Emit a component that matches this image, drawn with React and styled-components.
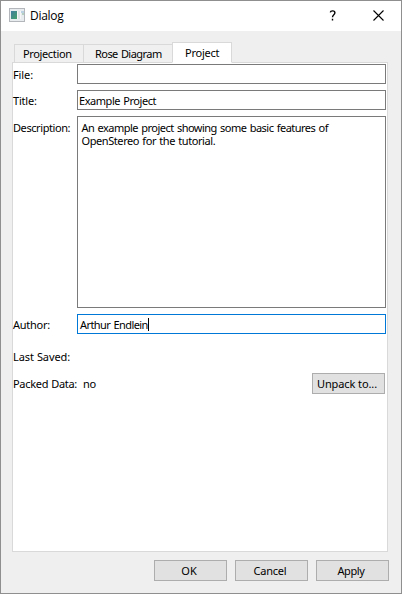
import React from "react";
import styled, { createGlobalStyle } from "styled-components";

const GlobalStyle = createGlobalStyle`
  * { box-sizing: border-box; }
  body { margin: 0; }
`;

const Window = styled.div`
  width: 402px;
  height: 594px;
  display: flex;
  flex-direction: column;
  border: 1px solid #8f8f8f;
  background: #efefef;
  color: #000;
  font: 11px/13px "Noto Sans", "Open Sans", sans-serif;
  overflow: hidden;
  white-space: nowrap;
`;

const TitleBar = styled.header`
  height: 30px;
  flex: none;
  display: flex;
  align-items: center;
  background: #fff;
  padding: 0 17px 2px 8px;
`;

const Title = styled.h1`
  margin: 2px auto 0 5px;
  font: 12px/16px "Open Sans", "Noto Sans", sans-serif;
  letter-spacing: -0.3px;
`;

const Glyph = styled.svg`
  display: block;
  flex: none;
  margin-right: ${(p) => p.$gap || 0}px;
`;

const Label = styled.span`
  display: block;
  letter-spacing: ${(p) => p.$spacing || 0}px;
  word-spacing: ${(p) => p.$words || 0}px;
`;

const Tabs = styled.nav`
  height: 21px;
  margin: 11px 0 -1px 13px;
  flex: none;
  display: flex;
  align-items: flex-end;
  z-index: 1;
`;

const Tab = styled.div`
  width: ${(p) => p.$width}px;
  height: ${(p) => (p.$active ? 21 : 19)}px;
  display: flex;
  padding: ${(p) => (p.$active ? 3 : 2)}px 0 0 ${(p) => p.$indent}px;
  border: 1px solid #d9d9d9;
  border-right-width: ${(p) => (p.$active ? 1 : 0)}px;
  border-bottom-color: ${(p) => (p.$active ? "#fff" : "#d9d9d9")};
  background: ${(p) => (p.$active ? "#fff" : "#f0f0f0")};
`;

const Pane = styled.main`
  width: 376px;
  height: 490px;
  margin-left: 11px;
  flex: none;
  border: 1px solid #d9d9d9;
  background: #fff;
  padding-top: 1px;
`;

const Row = styled.div`
  display: grid;
  grid-template-columns: 64px 309px;
  grid-template-rows: ${(p) => p.$height}px;
  height: ${(p) => p.$height}px;
  margin-bottom: ${(p) => p.$gap}px;
`;

const Caption = styled.div`
  padding-top: ${(p) => p.$top}px;
`;

const Field = styled.div`
  display: flex;
  border: 1px solid ${(p) => (p.$focus ? "#0078d7" : "#7a7a7a")};
  background: #fff;
  padding: ${(p) => p.$pad || "3px 1px 0"};
`;

const Caret = styled.i`
  width: 1px;
  height: 13px;
  background: #000;
`;

const Value = styled.div`
  display: flex;
  justify-content: space-between;
  padding: 0 1px 0 6px;
`;

const Button = styled.button`
  width: 73px;
  height: 21px;
  padding: 0 3px 0 0;
  border: 1px solid #adadad;
  background: #e1e1e1;
  color: #000;
  font: inherit;
`;

const Footer = styled.footer`
  display: flex;
  justify-content: flex-end;
  gap: 8px;
  padding: 8px 12px 0 0;
`;

export default function App() {
  return (
    <>
      <GlobalStyle />
      <Window>
        <TitleBar>
          <Glyph width="16" height="14" viewBox="0 0 16 14" shapeRendering="crispEdges">
            <defs>
              <linearGradient id="screen" x1="0" y1="0" x2="1" y2="1">
                <stop offset="0" stopColor="#427da0" />
                <stop offset="1" stopColor="#45a16a" />
              </linearGradient>
            </defs>
            <path fill="#b3b7bb" d="M0 0h16v14H0z" />
            <path fill="#e9ecef" d="M1 1h14v12H1z" />
            <path fill="url(#screen)" d="M2 3h6v8H2z" />
            <path fill="#f7f7f7" d="M8 3h4v8H8z" />
            <path fill="#dfe3e5" d="M9 3h2v8H9z" />
            <path fill="#b9d0e2" d="M12 3h3v2h-3z" />
            <path fill="#b4cfbf" d="M13 5h2v2h-2z" />
          </Glyph>
          <Title>Dialog</Title>
          <Glyph width="7" height="11" viewBox="0 0 7 11" $gap={37}>
            <path d="M1.3 2.3C1.6.4 5.9.2 5.9 2.8 5.9 4.8 3.5 4.6 3.5 7.2M3.5 8.8v1.6" fill="none" stroke="#000" strokeWidth="1.4" />
          </Glyph>
          <Glyph width="11" height="11" viewBox="0 0 11 11">
            <path d="M.5.5l10 10M10.5.5l-10 10" stroke="#000" strokeWidth="1.1" />
          </Glyph>
        </TitleBar>
        <Tabs>
          <Tab $width={69} $indent={8}><Label $spacing={-0.36}>Projection</Label></Tab>
          <Tab $width={89} $indent={11}><Label $spacing={-0.55} $words={0.8}>Rose Diagram</Label></Tab>
          <Tab $width={60} $indent={12} $active><Label $spacing={-0.25}>Project</Label></Tab>
        </Tabs>
        <Pane>
          <Row $height={20} $gap={6}>
            <Caption $top={4}><Label $spacing={-0.1}>File:</Label></Caption>
            <Field />
          </Row>
          <Row $height={20} $gap={6}>
            <Caption $top={4}><Label $spacing={-0.2}>Title:</Label></Caption>
            <Field><Label $spacing={-0.45} $words={0.8}>Example Project</Label></Field>
          </Row>
          <Row $height={192} $gap={6}>
            <Caption $top={5}><Label $spacing={-0.42}>Description:</Label></Caption>
            <Field $pad="4px 3.5px">
              <div>
                <Label $spacing={-0.53} $words={1}>An example project showing some basic features of</Label>
                <Label $spacing={-0.42} $words={0.8}>OpenStereo for the tutorial.</Label>
              </div>
            </Field>
          </Row>
          <Row $height={20} $gap={16}>
            <Caption $top={4}><Label $spacing={-0.25}>Author:</Label></Caption>
            <Field $focus $pad="3px 2px 0"><Label $spacing={-0.56} $words={0.8}>Arthur Endlein</Label><Caret /></Field>
          </Row>
          <Row $height={13} $gap={10}>
            <Caption $top={0}><Label $spacing={-0.1} $words={0.4}>Last Saved:</Label></Caption>
          </Row>
          <Row $height={21} $gap={0}>
            <Caption $top={4}><Label $spacing={-0.3} $words={0.5}>Packed Data:</Label></Caption>
            <Value>
              <Caption $top={4}><Label $spacing={-0.2}>no</Label></Caption>
              <Button><Label $spacing={-0.1}>Unpack to...</Label></Button>
            </Value>
          </Row>
        </Pane>
        <Footer>
          <Button><Label>OK</Label></Button>
          <Button><Label $spacing={-0.2}>Cancel</Label></Button>
          <Button><Label $spacing={-0.4}>Apply</Label></Button>
        </Footer>
      </Window>
    </>
  );
}
